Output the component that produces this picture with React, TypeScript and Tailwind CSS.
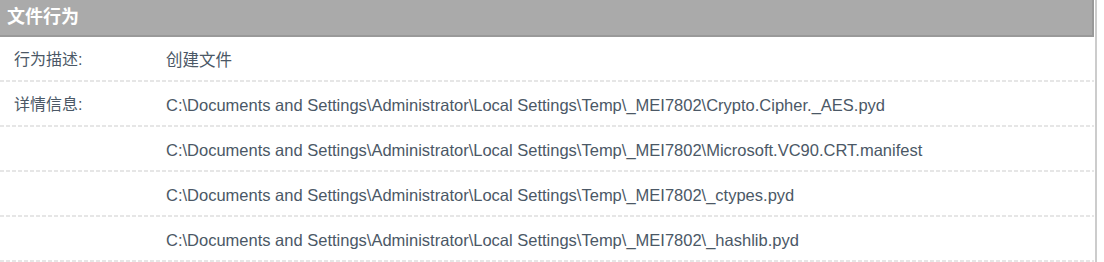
import React from 'react';

const files = [
  'C:\\Documents and Settings\\Administrator\\Local Settings\\Temp\\_MEI7802\\Crypto.Cipher._AES.pyd',
  'C:\\Documents and Settings\\Administrator\\Local Settings\\Temp\\_MEI7802\\Microsoft.VC90.CRT.manifest',
  'C:\\Documents and Settings\\Administrator\\Local Settings\\Temp\\_MEI7802\\_ctypes.pyd',
  'C:\\Documents and Settings\\Administrator\\Local Settings\\Temp\\_MEI7802\\_hashlib.pyd',
];

const font = "font-['Liberation_Sans','Noto_Sans_CJK_SC',sans-serif]";

const Dash = () => (
  <div className="h-[2px] bg-[linear-gradient(to_right,#e6e6e6_4px,transparent_4px)] bg-[length:6px_2px]" />
);

const Row: React.FC<{ label?: string; value: string; h: string }> = ({ label, value, h }) => (
  <>
    <div className={`flex ${h} items-center pt-[3px] text-[16.5px] text-[#4b5866]`}>
      <div className="w-[166px] pl-[14px] text-[16px]">{label}</div>
      <div>{value}</div>
    </div>
    <Dash />
  </>
);

export default function App() {
  return (
    <div className={`flex w-[1104px] bg-white ${font}`}>
      <div className="w-[1094px]">
        <div className="flex h-[37px] items-center border-b-2 border-r-2 border-[#999] bg-[#aaaaaa] pl-[7px] text-[18px] font-bold text-white">
          文件行为
        </div>
        <Row label="行为描述:" value="创建文件" h="h-[43px]" />
        {files.map((f, i) => (
          <Row key={f} label={i === 0 ? '详情信息:' : undefined} value={f} h="h-[43px]" />
        ))}
      </div>
      <div className="ml-[1px] w-[2px] self-stretch bg-[#cccccc]" />
    </div>
  );
}
